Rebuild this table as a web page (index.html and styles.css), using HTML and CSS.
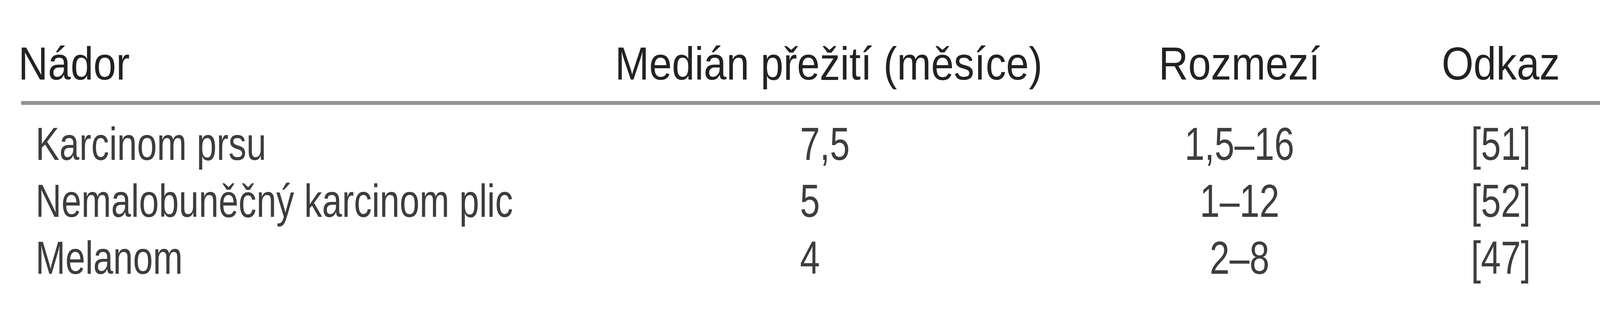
FILE: index.html
```html
<!DOCTYPE html>
<html lang="cs">
<head>
<meta charset="utf-8">
<title>Nádor – medián přežití</title>
<link rel="stylesheet" href="styles.css">
</head>
<body>
<div class="table">
  <div class="row head">
    <div class="cell c1"><span class="t">Nádor</span></div>
    <div class="cell c2"><span class="t">Medián přežití (měsíce)</span></div>
    <div class="cell c3"><span class="t">Rozmezí</span></div>
    <div class="cell c4"><span class="t">Odkaz</span></div>
  </div>
  <div class="body">
    <div class="row">
      <div class="cell c1"><span class="t">Karcinom prsu</span></div>
      <div class="cell c2"><span class="t">7,5</span></div>
      <div class="cell c3"><span class="t">1,5–16</span></div>
      <div class="cell c4"><span class="t">[51]</span></div>
    </div>
    <div class="row">
      <div class="cell c1"><span class="t">Nemalobuněčný karcinom plic</span></div>
      <div class="cell c2"><span class="t">5</span></div>
      <div class="cell c3"><span class="t">1–12</span></div>
      <div class="cell c4"><span class="t">[52]</span></div>
    </div>
    <div class="row">
      <div class="cell c1"><span class="t">Melanom</span></div>
      <div class="cell c2"><span class="t">4</span></div>
      <div class="cell c3"><span class="t">2–8</span></div>
      <div class="cell c4"><span class="t">[47]</span></div>
    </div>
  </div>
</div>
</body>
</html>
```
FILE: styles.css
```css
html, body {
  margin: 0;
  padding: 0;
  background: #ffffff;
}
body {
  font-family: "Liberation Sans", Arial, sans-serif;
  font-size: 119px;
  line-height: 146px;
}
.table {
  margin-left: 54px;
  width: 4076px;
  padding-top: 90px;
}
.row {
  display: grid;
  grid-template-columns: 1446px 1226px 894px 444px;
}
.head {
  color: #222222;
  padding-bottom: 23px;
  border-bottom: 10px solid #959499;
}
.body {
  padding-top: 27px;
  color: #3d3d3d;
}
.cell {
  white-space: nowrap;
}
.t {
  display: inline-block;
}
.head .t { transform: scaleX(0.88); }
.body .t { transform: scaleX(0.77); }
.c1 .t { transform-origin: left center; }
.c2 .t { transform-origin: center center; }
.body .c2 .t { transform-origin: left center; }
.c3 .t, .c4 .t { transform-origin: center center; }
.head .c1 { margin-left: -7px; }
.body .c1 { padding-left: 37px; }
.head .c2 { text-align: center; }
.body .c2 { padding-left: 548px; }
.c3 { text-align: center; }
.c4 { text-align: center; }
```
